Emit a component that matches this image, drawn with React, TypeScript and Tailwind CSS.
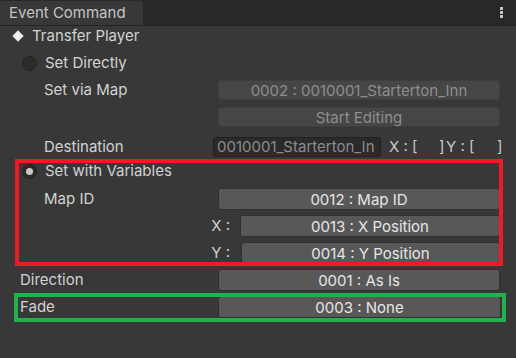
import React from 'react';

const Field: React.FC<{ text: string; disabled?: boolean; className?: string }> = ({
  text,
  disabled,
  className = '',
}) => (
  <div
    className={`flex h-full items-center justify-center rounded-[3px] border leading-none whitespace-nowrap ${
      disabled
        ? 'border-[#3e3e3e] bg-[#464646] text-[#8e8e8e]'
        : 'border-[#303030] bg-[#585858] text-[#e6e6e6]'
    } ${className}`}
  >
    {text}
  </div>
);

const Radio: React.FC<{ checked?: boolean }> = ({ checked }) => (
  <div className="flex h-[15px] w-[15px] items-center justify-center rounded-full border border-[#232323] bg-[#2b2b2b]">
    {checked && <div className="h-[7px] w-[7px] rounded-full bg-[#c8c8c8]" />}
  </div>
);

export default function App() {
  return (
    <div className="h-[358px] w-[516px] overflow-hidden bg-[#383838] font-['Inter',sans-serif] text-[15px] leading-[20px] text-[#d2d2d2]">
      {/* tab bar */}
      <div className="flex h-[26px] items-end justify-between border-b border-[#232323] bg-[#282828]">
        <div className="flex h-[24px] w-[143px] items-center rounded-tr-[4px] bg-[#383838] pl-[9px] text-[#c4c4c4]">
          Event Command
        </div>
        <div className="mr-[13px] flex h-[26px] flex-col items-center justify-center gap-[1px]">
          <div className="h-[3px] w-[3px] bg-[#c4c4c4]" />
          <div className="h-[3px] w-[3px] bg-[#c4c4c4]" />
          <div className="h-[3px] w-[3px] bg-[#c4c4c4]" />
        </div>
      </div>

      {/* Transfer Player */}
      <div className="flex h-[20px] items-center pl-[14px]">
        <div className="h-[8px] w-[8px] rotate-45 bg-[#eeeeee]" />
        <span className="ml-[10px]">Transfer Player</span>
      </div>

      {/* Set Directly */}
      <div className="mt-[7px] flex h-[20px] items-center pl-[22px]">
        <Radio />
        <span className="ml-[8px]">Set Directly</span>
      </div>

      <div className="mt-[7px] flex h-[20px] items-center">
        <div className="w-[218px] pl-[44px]">Set via Map</div>
        <Field className="w-[282px]" text="0002 : 0010001_Starterton_Inn" disabled />
      </div>

      <div className="mt-[7px] flex h-[20px] items-center">
        <div className="w-[218px]" />
        <Field className="w-[282px]" text="Start Editing" disabled />
      </div>

      <div className="mt-[10px] flex h-[20px] items-center">
        <div className="w-[213px] pl-[44px]">Destination</div>
        <div className="flex h-full w-[168px] items-center rounded-[3px] border border-[#212121] bg-[#2a2a2a] pl-[3px] whitespace-nowrap text-[#8c8c8c]">
          0010001_Starterton_In
        </div>
        <div className="ml-[8px] flex items-center whitespace-pre text-[#c8c8c8]">
          <span className="w-[50px]">X : [</span>
          <span className="w-[7px]">]</span>
          <span className="w-[51px]">Y : [</span>
          <span>]</span>
        </div>
      </div>

      {/* Set with Variables (highlighted) */}
      <div className="relative mt-[4px] pb-[1px]">
        <div className="flex h-[20px] items-center pl-[22px]">
          <Radio checked />
          <span className="ml-[8px]">Set with Variables</span>
        </div>
        <div className="mt-[7px] flex h-[22px] items-center">
          <div className="w-[218px] pl-[44px]">Map ID</div>
          <Field className="w-[282px]" text="0012 : Map ID" />
        </div>
        <div className="mt-[5px] flex h-[22px] items-center">
          <div className="w-[240px] pr-[10px] text-right">X :</div>
          <Field className="w-[260px]" text="0013 : X Position" />
        </div>
        <div className="mt-[5px] flex h-[22px] items-center">
          <div className="w-[241px] pr-[11px] text-right">Y :</div>
          <Field className="w-[259px]" text="0014 : Y Position" />
        </div>
        <div className="pointer-events-none absolute top-[-2px] right-[13px] bottom-[-1px] left-[15px] border-4 border-[#ed1c24]" />
      </div>

      <div className="mt-[4px] flex h-[22px] items-center">
        <div className="w-[218px] pl-[20px]">Direction</div>
        <Field className="w-[282px]" text="0001 : As Is" />
      </div>

      {/* Fade (highlighted) */}
      <div className="relative mt-[5px]">
        <div className="flex h-[22px] items-center">
          <div className="w-[218px] pl-[20px]">Fade</div>
          <Field className="w-[283px]" text="0003 : None" />
        </div>
        <div className="pointer-events-none absolute top-[-3px] right-[10px] bottom-[-4px] left-[14px] border-4 border-[#22b14c]" />
      </div>
    </div>
  );
}
